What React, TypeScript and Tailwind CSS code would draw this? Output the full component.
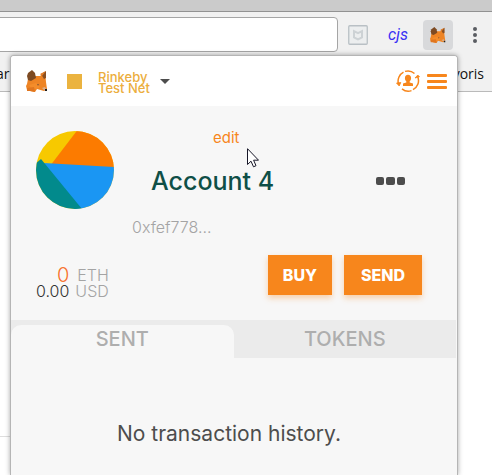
import React from "react";

function Fox({ className }: { className: string }) {
  return (
    <svg className={className} viewBox="0 0 22 22" aria-hidden="true">
      <path d="M1 14 2 9 6 6 14 6 19 2 20 12 21 19 18 21 11 19 9 22 4 21 1 20 0 16Z" fill="#ee8424" />
      <path d="M1 6 2 3 6 0 9 3 10 8 5 11 2 10Z" fill="#7d4a22" />
      <path d="M15 4 20 1 20 8 18 9Z" fill="#8a4f21" />
      <path d="M14 4 20 1 16 6Z" fill="#e27c25" />
      <path d="M3 15 10 13 14 17 11 19 5 18Z" fill="#f48d2b" />
      <path d="M1 18 8 17 9 22 4 21 1 21Z" fill="#e0761f" />
      <path d="M11 14 13 14 12 16Z" fill="#8a5a35" />
      <path d="M16 18 19 17 20 19 18 20Z" fill="#d9b08e" />
      <path d="M19 19 21 19 21 21 19 21Z" fill="#1f1f1f" />
    </svg>
  );
}

function Shield() {
  return (
    <svg className="size-5" viewBox="0 0 20 20" fill="none" aria-hidden="true">
      <rect x="0.75" y="0.75" width="18.5" height="18.5" rx="1" fill="#eceeef" stroke="#b9c0c5" strokeWidth="1.3" />
      <path d="M6 6.200 10 8.200 14 6.200V12.500L10 14.500 6 12.500Z" stroke="#cdd2d5" strokeWidth="2" />
    </svg>
  );
}

function SwitchAccount() {
  return (
    <svg className="size-6" viewBox="0 0 24 24" fill="none" stroke="#f7861c" strokeWidth="1.5" aria-hidden="true">
      <path d="M2.500 15A10 10 0 0 1 7.500 3.200M9 2.400A10 10 0 0 1 18.500 4.500" />
      <path d="M21.800 8A10 10 0 0 1 17 20.600M15.500 21.600A10 10 0 0 1 6 19.800" />
      <path d="M0.500 14 4.800 13.500 3.200 17ZM19 9 23.500 7.800 21.800 6Z" fill="#f7861c" strokeWidth="0.8" />
      <path d="M12 5.800c2 0 3.100 1.300 3.100 3.200 0 1.500-.6 2.600-1.400 3.300v1.200l3.300 1.100V17H7v-2.400l3.300-1.100v-1.200C9.500 11.600 8.900 10.500 8.900 9c0-1.900 1.100-3.200 3.100-3.200Z" fill="#f7861c" stroke="none" />
    </svg>
  );
}

function Avatar() {
  return (
    <svg className="size-[78px] shrink-0" viewBox="0 0 78 78" role="img" aria-label="Account 4 avatar">
      <defs>
        <clipPath id="disc">
          <circle cx="39" cy="39" r="39" />
        </clipPath>
      </defs>
      <g clipPath="url(#disc)">
        <path d="M0 0H78V78H0Z" fill="#f7c900" />
        <path d="M43 -3 15.500 33 78 37V-3Z" fill="#fc7b00" />
        <path d="M8 32 78 36V78H40Z" fill="#1a96f3" />
        <path d="M-1 33 5 28 46 78H-1Z" fill="#028a8c" />
      </g>
    </svg>
  );
}

function Cursor() {
  return (
    <svg className="absolute top-[92px] left-[236px] h-5 w-3" viewBox="0 0 12 20" aria-hidden="true">
      <path d="M.5.7V16.500L4 13.200 6.500 18.800 9 17.700 6.600 12.200H11.500Z" fill="#fff" stroke="#171728" />
    </svg>
  );
}

function Browser() {
  return (
    <div className="flex h-full flex-col bg-white">
      <div className="h-3 shrink-0 border-b border-[#929292] bg-[#cbcbcb]" />
      <div className="h-20 shrink-0 border-b border-[#bababa] bg-[#f1f1f1]">
        <div className="flex h-[45px] items-center pr-2">
          <input
            aria-label="Address"
            className="-ml-1 h-[35px] min-w-0 flex-1 rounded border border-[#a5a5a5] bg-white px-3 text-sm"
          />
          <button aria-label="Site safety" className="ml-[10px]">
            <Shield />
          </button>
          <button className="ml-5 w-5 font-['Roboto',sans-serif] text-[16px] leading-5 text-[#3a32f4] italic">cjs</button>
          <button aria-label="Wallet" className="ml-[15px] flex h-[30px] w-[30px] items-center justify-center rounded-sm bg-[#d8d9db]">
            <Fox className="size-4" />
          </button>
          <button aria-label="Browser menu" className="ml-[13px] flex w-[18px] flex-col items-center gap-[2px]">
            <span className="size-1 rounded-full bg-[#5a5d62]" />
            <span className="size-1 rounded-full bg-[#5a5d62]" />
            <span className="size-1 rounded-full bg-[#5a5d62]" />
          </button>
        </div>
        <div className="flex h-8 items-center justify-between pr-2 font-['Open_Sans',sans-serif] text-[14px] text-[#111]">
          <span className="-ml-1">arr</span>
          <span>Favoris</span>
        </div>
      </div>
      <div className="h-[345px] w-1/4 shrink-0 border-b border-[#dedede]" />
    </div>
  );
}

function Popup() {
  return (
    <main className="absolute top-[55px] right-[34px] bottom-0 left-[10px] overflow-hidden rounded-t border border-b-0 border-[#b5b5b5] bg-[#f7f7f7] font-['Inter',sans-serif] shadow-[0_0_5px_rgba(0,0,0,0.35)]">
      <header className="flex h-[50px] items-center bg-white pr-[10px] pl-[15px]">
        <Fox className="size-[22px]" />
        <button className="ml-[19px] flex items-center text-left text-[13px] leading-[11px] font-medium text-[#ecae3d]">
          <span className="size-[15px] bg-[#ebb33f]" />
          <span className="ml-4 w-[62px] pt-[3px]">
            Rinkeby
            <br />
            Test Net
          </span>
          <span className="border-x-[5px] border-t-[5px] border-x-transparent border-t-[#4d4d4d]" />
        </button>
        <button aria-label="Switch account" className="ml-auto">
          <SwitchAccount />
        </button>
        <button aria-label="Menu" className="ml-[7px] flex w-5 flex-col gap-[3px]">
          <span className="h-[3px] rounded-[1px] bg-[#f7861c]" />
          <span className="h-[3px] rounded-[1px] bg-[#f7861c]" />
          <span className="h-[3px] rounded-[1px] bg-[#f7861c]" />
        </button>
      </header>

      <section className="h-[214px] pt-[25px] pr-[35px] pl-[25px]">
        <div className="flex h-[124px]">
          <Avatar />
          <div className="ml-[18px] flex flex-1 flex-col items-start">
            <button className="ml-[81px] h-[14px] text-[15px] leading-[14px] text-[#f7861c]">edit</button>
            <div className="mt-[21px] flex h-[30px] w-full items-center justify-between pr-[17px] pl-[19px]">
              <h1 className="text-[25px] leading-[30px] font-medium text-[#0f4f47]">Account 4</h1>
              <button aria-label="Account options" className="flex gap-[2px]">
                <span className="size-2 rounded-[2px] bg-[#4d4d4d]" />
                <span className="h-2 w-[9px] rounded-[2px] bg-[#4d4d4d]" />
                <span className="size-2 rounded-[2px] bg-[#4d4d4d]" />
              </button>
            </div>
            <p className="mt-[21px] text-[16px] leading-5 font-light text-[#a4a4a4]">0xfef778...</p>
          </div>
        </div>
        <div className="flex items-start justify-between">
          <dl className="mt-3 grid grid-cols-[auto_auto] justify-start gap-x-[6px] text-right text-[16px] leading-4 font-light text-[#a4a4a4]">
            <dd className="text-[20px] leading-4 text-[#f7712c]">0</dd>
            <dt>ETH</dt>
            <dd className="text-[#333]">0.00</dd>
            <dt>USD</dt>
          </dl>
          <div className="flex gap-3 text-[16px] font-extrabold text-white">
            <button className="h-10 w-16 bg-[#f7861c] shadow-[0_3px_6px_rgba(247,134,28,0.36)]">BUY</button>
            <button className="h-10 w-[78px] bg-[#f7861c] shadow-[0_3px_6px_rgba(247,134,28,0.36)]">SEND</button>
          </div>
        </div>
      </section>

      <nav className="mr-px grid h-[38px] grid-cols-2 bg-[#ebebeb] pt-[5px] text-[20px] leading-7 font-medium text-[#aeaeae]">
        <button className="rounded-t-[10px] bg-[#f7f7f7] pb-[5px]">SENT</button>
        <button className="pb-[5px]">TOKENS</button>
      </nav>
      <p className="pt-[62px] pr-[10px] text-center text-[21px] leading-7 text-[#4d4d4d]">No transaction history.</p>
      <Cursor />
    </main>
  );
}

export default function App() {
  return (
    <div className="relative h-screen overflow-hidden">
      <Browser />
      <Popup />
    </div>
  );
}
